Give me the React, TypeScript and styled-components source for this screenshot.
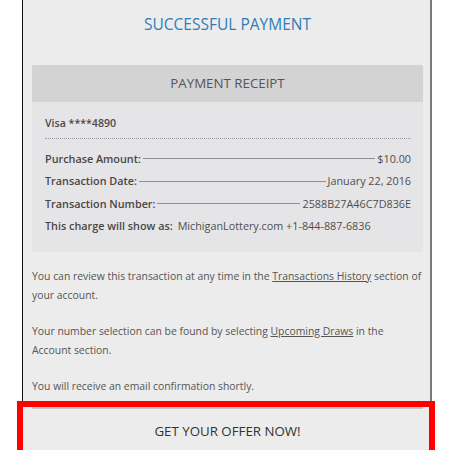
import styled, { createGlobalStyle } from "styled-components";

const GlobalStyle = createGlobalStyle`
  html, body {
    margin: 0;
    padding: 0;
    background: #ffffff;
    overflow: hidden;
  }
  body {
    font-family: "Open Sans", "Liberation Sans", sans-serif;
  }
  *, *::before, *::after {
    box-sizing: border-box;
  }
`;

const Frame = styled.div`
  margin-left: 22px;
  width: 410px;
  min-height: 470px;
  background: #ececec;
  border-left: 1px solid #111;
  border-right: 2px solid #7a7a7a;
  padding: 0 7px 0 9px;
`;

const Title = styled.h2`
  margin: 0;
  padding-top: 12px;
  height: 65px;
  line-height: 25px;
  text-align: center;
  font-size: 15.5px;
  font-weight: 400;
  color: #2f7cb6;
`;

const Receipt = styled.section`
  background: #e5e4e6;
  border-radius: 2px;
`;

const ReceiptHeader = styled.div`
  height: 37px;
  line-height: 37px;
  text-align: center;
  background: #d3d3d3;
  font-size: 13.3px;
  color: #555;
  border-radius: 2px 2px 0 0;
`;

const ReceiptBody = styled.div`
  padding: 12px 12px 15px 13px;
`;

const CardLine = styled.div`
  line-height: 18px;
  font-size: 10.6px;
  font-weight: 600;
  color: #4a4a4a;
  padding-bottom: 6px;
  border-bottom: 1px dotted #9a9a9a;
  margin-bottom: 8px;
`;

const Row = styled.div`
  display: flex;
  align-items: center;
  height: 22.5px;
  font-size: 10.8px;
  color: #4f4f4f;
`;

const Label = styled.span`
  font-weight: 600;
  color: #474747;
`;

const Leader = styled.span`
  flex: 1;
  height: 1px;
  margin: 1px 2px 0;
  background: #8e8e8e;
`;

const Value = styled.span<{ $gap?: boolean }>`
  margin-left: ${(p) => (p.$gap ? "5px" : "0")};
`;

const Note = styled.p`
  margin: 0;
  font-size: 10.4px;
  line-height: 19px;
  color: #555;

  & + & {
    margin-top: 17px;
  }

  &:first-of-type {
    margin-top: 14.5px;
  }
`;

const Anchor = styled.a`
  color: inherit;
  text-decoration: underline;
`;

const Offer = styled.div`
  position: relative;
  margin-top: 11.5px;
  height: 60px;
  border-top: 2px solid #c4c4c4;
  text-align: center;
  font-size: 13.3px;
  line-height: 44px;
  color: #333;
`;

// red callout drawn around the offer button
const Highlight = styled.div`
  position: absolute;
  top: -8px;
  left: -15px;
  right: -12px;
  height: 80px;
  border: 6px solid #ff0000;
  border-bottom: none;
  pointer-events: none;
`;

const rows = [
  { label: "Purchase Amount:", value: "$10.00" },
  { label: "Transaction Date:", value: "January 22, 2016" },
  { label: "Transaction Number:", value: "2588B27A46C7D836E" },
];

export default function App() {
  return (
    <>
      <GlobalStyle />
      <Frame>
        <Title>SUCCESSFUL PAYMENT</Title>
        <Receipt>
          <ReceiptHeader>PAYMENT RECEIPT</ReceiptHeader>
          <ReceiptBody>
            <CardLine>Visa ****4890</CardLine>
            {rows.map((r) => (
              <Row key={r.label}>
                <Label>{r.label}</Label>
                <Leader />
                <Value>{r.value}</Value>
              </Row>
            ))}
            <Row>
              <Label>This charge will show as:</Label>
              <Value $gap>MichiganLottery.com +1-844-887-6836</Value>
            </Row>
          </ReceiptBody>
        </Receipt>
        <Note>
          You can review this transaction at any time in the{" "}
          <Anchor href="#">Transactions History</Anchor> section of your account.
        </Note>
        <Note>
          Your number selection can be found by selecting{" "}
          <Anchor href="#">Upcoming Draws</Anchor> in the Account section.
        </Note>
        <Note>You will receive an email confirmation shortly.</Note>
        <Offer>
          GET YOUR OFFER NOW!
          <Highlight />
        </Offer>
      </Frame>
    </>
  );
}
